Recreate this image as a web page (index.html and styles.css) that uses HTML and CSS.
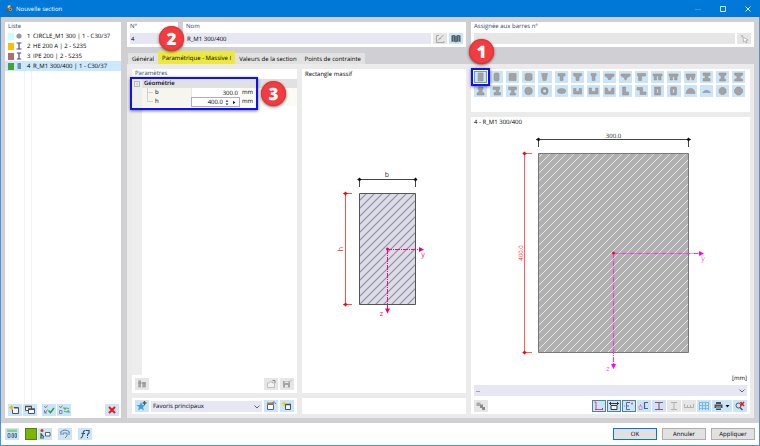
FILE: index.html
```html
<!DOCTYPE html>
<html lang="fr">
<head>
<meta charset="utf-8">
<meta name="viewport" content="width=device-width, initial-scale=1">
<title>Nouvelle section</title>
<link rel="stylesheet" href="styles.css">
</head>
<body>
<div class="window">
  <header class="titlebar">
    <svg class="app-icon" viewBox="0 0 10 10"><path d="M1 6L4 1 9 3 8 7 5 9 2 9Z" fill="#5b5a55"/><path d="M3 2L6 1 6 3 3 5Z" fill="#d9d2b8"/><circle cx="6" cy="6" r="2" fill="#a8925c"/><circle cx="6" cy="6" r=".8" fill="#333"/></svg>
    <h1>Nouvelle section</h1>
    <div class="win-buttons">
      <button aria-label="Réduire" disabled><svg viewBox="0 0 8 8"><path d="M1 4.500H7" stroke="#3a94df"/></svg></button>
      <button aria-label="Agrandir"><svg viewBox="0 0 8 8"><path d="M1.500 1.500H6.500V6.500H1.500Z" stroke="#cfe6fa" fill="none"/></svg></button>
      <button aria-label="Fermer"><svg viewBox="0 0 8 8"><path d="M1.500 1.500L6.500 6.500M6.500 1.500L1.500 6.500" stroke="#e6f2fc"/></svg></button>
    </div>
  </header>

  <main class="work">
    <aside class="list-panel panel">
      <h2 class="caption">Liste</h2>
      <ul class="sections">
        <li><button class="section-row"><span class="swatch cyan"></span><svg viewBox="0 0 8 8"><circle cx="4" cy="4" r="2.600" fill="#999"/></svg><span class="num">1</span><span>CIRCLE_M1 300 | 1 - C30/37</span></button></li>
        <li><button class="section-row"><span class="swatch amber"></span><svg viewBox="0 0 8 8"><path d="M1.500 1H6.500M4 1V7M1.500 7H6.500" stroke="#4b4b8c" stroke-width="1.200"/></svg><span class="num">2</span><span>HE 200 A | 2 - S235</span></button></li>
        <li><button class="section-row"><span class="swatch rose"></span><svg viewBox="0 0 8 8"><path d="M1.800 1H6.200M4 1V7M1.800 7H6.200" stroke="#4b4b8c" stroke-width="1.200"/></svg><span class="num">3</span><span>IPE 200 | 2 - S235</span></button></li>
        <li><button class="section-row selected"><span class="swatch green"></span><svg viewBox="0 0 8 8"><path d="M2.500 1H6V7H2.500Z" fill="#6a93ad"/></svg><span class="num">4</span><span>R_M1 300/400 | 1 - C30/37</span></button></li>
      </ul>
      <div class="list-lines"></div>
      <div class="toolbar">
        <button class="tool" aria-label="Nouvelle"><svg viewBox="0 0 14 12"><path d="M4.500 5.500V9.500H10.500V3.500H6" fill="#f6f8fa" stroke="#47525c"/><path d="M6 4H10" stroke="#47525c"/><path d="M1 3.500H6M3.500 1V6M2 2L5 5M5 2L2 5" stroke="#d8bd00" stroke-width=".7"/></svg></button>
        <button class="tool" aria-label="Copier"><svg viewBox="0 0 14 12"><path d="M2.500 2.500H8.500V6.500H2.500Z" fill="#f6f8fa" stroke="#47525c"/><path d="M5.500 5.500H11.500V9.500H5.500Z" fill="#f6f8fa" stroke="#47525c"/><path d="M5 5H12M2 2.500H9" stroke="#47525c" stroke-width="1.500"/></svg></button>
        <button class="tool gap" aria-label="Tout sélectionner"><svg viewBox="0 0 14 12"><path d="M2.500 2L3.500 4 5.500 1.500M2.500 6V9H5M2.500 7L3.500 8.500 5.500 5.500" fill="none" stroke="#667887" stroke-width=".8"/><path d="M6.500 6.500L8.500 8.500 12 4" fill="none" stroke="#2f9c5b" stroke-width="1.500"/></svg></button>
        <button class="tool" aria-label="Inverser la sélection"><svg viewBox="0 0 14 12"><path d="M2.500 2L3.500 4 5.500 1.500M2.500 6.500H5V9.500H2.500Z" fill="none" stroke="#667887" stroke-width=".8"/><path d="M7 5A3 2 0 0 1 12 5M12 7A3 2 0 0 1 7 7M7 3V5H9M12 9V7H10" fill="none" stroke="#4da873"/></svg></button>
        <button class="tool push" aria-label="Supprimer"><svg viewBox="0 0 14 12"><path d="M4 3L10 9M10 3L4 9" stroke="#f01414" stroke-width="2"/></svg></button>
      </div>
    </aside>

    <section class="editor">
      <div class="heads">
        <div class="panel head">
          <label class="caption" for="no">N°</label>
          <input id="no" class="field" value="4">
          <span class="badge badge-two">2</span>
        </div>
        <div class="panel head">
          <label class="caption" for="nom">Nom</label>
          <div class="row">
            <input id="nom" class="field" value="R_M1 300/400">
            <button class="tool off" aria-label="Modifier le nom"><svg viewBox="0 0 14 12"><path d="M6 2.500H3.500V9.500H11V8M5 7.500L10.500 2M8 5.500H6" fill="none" stroke="#a9a9a9"/></svg></button>
            <button class="tool" aria-label="Bibliothèque"><svg viewBox="0 0 14 12"><path d="M2.500 2.500Q5 1.500 7 3Q9 1.500 11.500 2.500V9Q9 8 7 9.500Q5 8 2.500 9Z" fill="#4b5f6c"/><path d="M7 3V9M4.500 3V8M9.500 3V8" stroke="#8fa9ba" stroke-width=".6"/></svg></button>
          </div>
        </div>
        <div class="panel head">
          <label class="caption" for="barres">Assignée aux barres n°</label>
          <div class="row">
            <input id="barres" class="field off" disabled>
            <button class="tool off" aria-label="Sélectionner les barres"><svg viewBox="0 0 14 12"><path d="M6 4L6.500 9 8 8 9 10 10 9.500 9 7.500 11 7Z" fill="#fff" stroke="#a8a8a8" stroke-width=".8"/><path d="M4 2L6 4M6 2L4 4" stroke="#b5b5b5" stroke-width=".8"/></svg></button>
          </div>
        </div>
      </div>

      <nav class="tabs">
        <button>Général</button>
        <button class="active">Paramétrique - Massive I</button>
        <button>Valeurs de la section</button>
        <button>Points de contrainte</button>
      </nav>

      <div class="pane">
        <div class="column">
          <div class="panel params">
            <h2 class="caption">Paramètres</h2>
            <div class="props">
              <div class="prop group"><span class="gutter"><svg viewBox="0 0 6 6"><path d="M.5.5H5.500V5.500H.5ZM2 3H4" fill="none" stroke="#999" stroke-width=".7"/></svg></span><span class="group-name">Géométrie</span></div>
              <div class="prop"><span class="gutter"></span><label for="pb"><svg viewBox="0 0 8 9"><path d="M2.500 0V9M2.500 4.500H8" stroke="#c9c9c4" stroke-width=".8"/></svg>b</label><span class="value"><input id="pb" value="300.0"></span><span class="unit">mm</span></div>
              <div class="prop"><span class="gutter"></span><label for="ph"><svg viewBox="0 0 8 9"><path d="M2.500 0V4.500H8" fill="none" stroke="#c9c9c4" stroke-width=".8"/></svg>h</label><span class="value editing"><input id="ph" value="400.0"><button aria-label="Incrément"><svg viewBox="0 0 4 8"><path d="M.5 3L2 1 3.500 3ZM.5 5L2 7 3.500 5Z" fill="#222"/></svg></button><button aria-label="Plus"><svg viewBox="0 0 4 8"><path d="M1 2L3.500 4 1 6Z" fill="#111"/></svg></button></span><span class="unit">mm</span></div>
              <span class="frame frame-params"></span>
              <span class="badge badge-three">3</span>
            </div>
            <div class="gutter-fill"></div>
            <div class="toolbar">
              <button class="tool off" aria-label="Info"><svg viewBox="0 0 14 12"><path d="M3 2.500H6V9.500H3ZM7 4H11V9.500H7Z" fill="#b3b3b3"/><path d="M3 5H11M5 2V9M9 4V9" stroke="#8f8f8f" stroke-width=".8"/></svg></button>
              <button class="tool off push" aria-label="Charger"><svg viewBox="0 0 14 12"><path d="M3.500 9.500V5H5.500L6 4H8.500V5H10.500V9.500Z" fill="#f4f4f4" stroke="#b5b5b5" stroke-width=".8"/><path d="M8.500 2.500H11V5" fill="none" stroke="#888"/></svg></button>
              <button class="tool off" aria-label="Enregistrer"><svg viewBox="0 0 14 12"><path d="M3 3H10V9.500H3Z" fill="#a3a3a3"/><path d="M4.500 3.500H8.500V5H4.500ZM5 7H8V9.500H5Z" fill="#e6e6e6"/><path d="M9 4L12 2" stroke="#bbb"/></svg></button>
            </div>
          </div>
          <div class="panel foot toolbar">
            <button class="tool" aria-label="Ajouter aux favoris"><svg viewBox="0 0 14 12"><path d="M6 2L7.200 5 10.500 5.200 8 7 9 10.500 6 8.500 3 10.500 4 7 1.500 5.200 4.800 5Z" fill="#3f9de0"/><path d="M9.500 1V5M7.500 3H11.500" stroke="#665f25" stroke-width="1.300"/></svg></button>
            <span class="select"><select aria-label="Favoris"><option>Favoris principaux</option></select><svg viewBox="0 0 8 6"><path d="M1.500 1.500L4 4 6.500 1.500" fill="none" stroke="#555" stroke-width=".9"/></svg></span>
            <button class="tool" aria-label="Gérer les favoris"><svg viewBox="0 0 14 12"><path d="M3.500 4.500H9.500V9.500H3.500Z" fill="#f6f8fa" stroke="#596570"/><path d="M3 3.500H8L10 2.500" fill="none" stroke="#a57b50" stroke-width="2"/><path d="M10 1.500L12 4" stroke="#6d86b5"/></svg></button>
            <button class="tool" aria-label="Nouveau favori"><svg viewBox="0 0 14 12"><path d="M5.500 4.500H10.500V9.500H5.500Z" fill="#f6f8fa" stroke="#47525c"/><path d="M5 4.500H11" stroke="#47525c" stroke-width="1.500"/><path d="M4 1L5 3 6.500 3.500 5 4.500 4 6.500 3 4.500 1.500 3.500 3 3Z" fill="#ead500"/></svg></button>
          </div>
        </div>

        <div class="column">
          <div class="panel sketch">
            <h2 class="plain">Rectangle massif</h2>
            <svg class="drawing" viewBox="302 79 164 314" role="img" aria-label="Schéma b × h">
              <defs><pattern id="hatchA" width="8" height="8" patternUnits="userSpaceOnUse"><path d="M-1 9L9 -1M-1 1L1 -1M7 9L9 7" stroke="#8f8f98" stroke-width="1.200"/></pattern></defs>
              <path d="M359.500 193.500H415.500V304.500H359.500Z" fill="#dcdce8"/>
              <path d="M359.500 193.500H415.500V304.500H359.500Z" fill="url(#hatchA)" stroke="#555"/>
              <path d="M357.500 179.500H417M359.500 179.500V187M415.500 179.500V187" stroke="#444"/>
              <path d="M357.500 179.500L359.500 177.500 361.500 179.500 359.500 181.500ZM413.500 179.500L415.500 177.500 417.500 179.500 415.500 181.500Z" fill="#111"/>
              <path d="M345.500 193.500V304.500M343 193.500H352M343 304.500H352" stroke="#ff5050"/>
              <path d="M343.500 193.500L345.500 191.500 347.500 193.500 345.500 195.500ZM343.500 304.500L345.500 302.500 347.500 304.500 345.500 306.500Z" fill="#f00"/>
              <path d="M387 249.500H419M387.500 249V309" fill="none" stroke="#e6108a" stroke-dasharray="5 1 1 1"/>
              <path d="M419 247L424 249.500 419 252ZM385 308.500L387.500 313.500 390 308.500Z" fill="#e6007e"/><circle cx="387.500" cy="249" r="1.500" fill="#e6007e"/>
              <text class="axis" x="387" y="177" fill="#333">b</text>
              <text class="axis" x="423" y="257" fill="#e6007e">y</text>
              <text class="axis" x="381.500" y="316" fill="#e6007e">z</text>
              <text class="axis" transform="translate(343 249) rotate(-90)" fill="#f22">h</text>
            </svg>
          </div>
          <div class="panel foot"></div>
        </div>

        <div class="column">
          <div class="panel shapes">
            <button aria-label="Rectangle" class="current"><svg viewBox="0 0 13 12"><path d="M4 2H9V10H4Z"/></svg></button>
            <button aria-label="Rectangle arrondi"><svg viewBox="0 0 13 12"><path d="M5 2H8L9 3V9L8 10H5L4 9V3Z"/></svg></button>
            <button aria-label="Carré"><svg viewBox="0 0 13 12"><path d="M3 2.500H10V9.500H3Z"/></svg></button>
            <button aria-label="Carré arrondi"><svg viewBox="0 0 13 12"><path d="M4 2.500H9L10 3.500V8.500L9 9.500H4L3 8.500V3.500Z"/></svg></button>
            <button aria-label="Trapèze"><svg viewBox="0 0 13 12"><path d="M3.500 2.500H9.500L8 9.500H5Z"/></svg></button>
            <button aria-label="Section T"><svg viewBox="0 0 13 12"><path d="M3 2.500H10V5H8V9.500H5V5H3Z"/></svg></button>
            <button aria-label="Section T à goussets"><svg viewBox="0 0 13 12"><path d="M2.500 2.500H10.500V4.500L8 6V9.500H5V6L2.500 4.500Z"/></svg></button>
            <button aria-label="Section T étroite"><svg viewBox="0 0 13 12"><path d="M4 2.500H9V4.500L8 5.500V9.500H5V5.500L4 4.500Z"/></svg></button>
            <button aria-label="Section T évasée"><svg viewBox="0 0 13 12"><path d="M2 3H11V5L8 7V8.500H5V7L2 5Z"/></svg></button>
            <button aria-label="Section T conique"><svg viewBox="0 0 13 12"><path d="M2 3H11V5L8 6.500L7 9H6L5 6.500L2 5Z"/></svg></button>
            <button aria-label="Demi T"><svg viewBox="0 0 13 12"><path d="M2.500 2.500H10.500V5H6.500V9.500H3.500V5H2.500Z"/></svg></button>
            <button aria-label="Double T"><svg viewBox="0 0 13 12"><path d="M2 3H11V5H10V9H7.500V5H5.500V9H3V5H2Z"/></svg></button>
            <button aria-label="Double T à goussets"><svg viewBox="0 0 13 12"><path d="M2 3H11V5L10 5.500V9H7.500V5.500H5.500V9H3V5.500L2 5Z"/></svg></button>
            <button aria-label="Double T conique"><svg viewBox="0 0 13 12"><path d="M2 3H11V5L9.500 9H8L7 5.500H6L5 9H3.500L2 5Z"/></svg></button>
            <button aria-label="Section I"><svg viewBox="0 0 13 12"><path d="M3 2H10V4.500H8V7.500H10V10H3V7.500H5V4.500H3Z"/></svg></button>
            <button aria-label="Section I à goussets"><svg viewBox="0 0 13 12"><path d="M3 2H10V4L8 5V7.500L9.500 8.500V10H3.500V8.500L5 7.500V5L3 4Z"/></svg></button>
            <button aria-label="Section I large"><svg viewBox="0 0 13 12"><path d="M2.500 2H10.500V4L8 5.500V7L10.500 8.500V10H2.500V8.500L5 7V5.500L2.500 4Z"/></svg></button>
            <button aria-label="Rail"><svg viewBox="0 0 13 12"><path d="M4 2H9V4L8 5.500V7L10 8V10H3V8L5 7V5.500L4 4Z"/></svg></button>
            <button aria-label="I décalé"><svg viewBox="0 0 13 12"><path d="M3 2H9.500V4.500H8.500V7.500H10.500V10H4V7.500H6V4.500H3Z"/></svg></button>
            <button aria-label="I asymétrique"><svg viewBox="0 0 13 12"><path d="M2.500 2H10.500V4.500L8 5V7.500L9.500 8.500V10H4V8.500L5.500 7.500V5L2.500 4.500Z"/></svg></button>
            <button aria-label="Cercle"><svg viewBox="0 0 13 12"><circle cx="6.500" cy="6" r="3.800"/></svg></button>
            <button aria-label="Anneau"><svg viewBox="0 0 13 12"><circle cx="6.500" cy="6" r="2.700" class="ring"/></svg></button>
            <button aria-label="Ellipse"><svg viewBox="0 0 13 12"><ellipse cx="6.500" cy="6" rx="4.200" ry="2.500"/></svg></button>
            <button aria-label="Section U"><svg viewBox="0 0 13 12"><path d="M2.500 3.500H5V6.500H8V3.500H10.500V9H2.500Z"/></svg></button>
            <button aria-label="U à goussets"><svg viewBox="0 0 13 12"><path d="M2 3H4.500V5.500L5.500 6.500H7.500L8.500 5.500V3H11V9H2Z"/></svg></button>
            <button aria-label="U conique"><svg viewBox="0 0 13 12"><path d="M2 3H4L5.500 6.500H7.500L9 3H11V9H2Z"/></svg></button>
            <button aria-label="Section L"><svg viewBox="0 0 13 12"><path d="M3.500 2H6.500V7H9.500V10H3.500Z"/></svg></button>
            <button aria-label="Section Z"><svg viewBox="0 0 13 12"><path d="M2 2.500H7.500V7H11V9.500H5V5H2Z"/></svg></button>
            <button aria-label="Caisson"><svg viewBox="0 0 13 12"><path fill-rule="evenodd" d="M3.500 2H9.500V10H3.500ZM5.500 4V8H7.500V4Z"/></svg></button>
            <button aria-label="Caisson arrondi"><svg viewBox="0 0 13 12"><path fill-rule="evenodd" d="M4 2H9L9.500 3V9L9 10H4L3.500 9V3ZM5.500 4V8H7.500V4Z"/></svg></button>
            <button aria-label="Demi-cercle"><svg viewBox="0 0 13 12"><path d="M2 8.500Q2.500 3.500 6.500 3.500T11 8.500Z"/></svg></button>
            <button aria-label="Segment"><svg viewBox="0 0 13 12"><path d="M2.500 7.500Q6.500 3 10.500 7.500Z"/></svg></button>
            <button aria-label="Octogone"><svg viewBox="0 0 13 12"><path d="M5 2.500H8L10 4.500V7.500L8 9.500H5L3 7.500V4.500Z"/></svg></button>
            <button aria-label="Polygone"><svg viewBox="0 0 13 12"><path d="M5 2H8L10.500 4.500V7.500L8 10H5L2.500 7.500V4.500Z"/></svg></button>
            <span class="frame frame-shape"></span>
            <span class="badge badge-one">1</span>
          </div>

          <div class="panel preview">
            <h2 class="plain">4 - R_M1 300/400</h2>
            <svg class="drawing" viewBox="474 127 273 247" role="img" aria-label="R_M1 300/400">
              <defs><pattern id="hatchB" width="8" height="8" patternUnits="userSpaceOnUse"><path d="M-1 9L9 -1M-1 1L1 -1M7 9L9 7" stroke="#e6e6e6"/></pattern></defs>
              <path d="M538.500 153.500H688.500V352.500H538.500Z" fill="#b0b0b0"/>
              <path d="M538.500 153.500H688.500V352.500H538.500Z" fill="url(#hatchB)" stroke="#777"/>
              <path d="M536 139.500H691M538.500 139.500V147M688.500 139.500V147" stroke="#444"/>
              <path d="M536.500 139.500L538.500 137.500 540.500 139.500 538.500 141.500ZM686.500 139.500L688.500 137.500 690.500 139.500 688.500 141.500Z" fill="#111"/>
              <path d="M524.500 153V353M522.500 153.500H532M522.500 352.500H532" stroke="#ff6060"/>
              <path d="M522.500 153.500L524.500 151.500 526.500 153.500 524.500 155.500ZM522.500 352.500L524.500 350.500 526.500 352.500 524.500 354.500Z" fill="#f00"/>
              <path d="M613.500 253.500H700M613.500 253V365" fill="none" stroke="#f03cf0" stroke-width="1.200" stroke-dasharray="5 1 1 1"/>
              <path d="M699 251L704 253.500 699 256ZM611 364L613.500 369 616 364Z" fill="#f0f"/><circle cx="613.500" cy="253" r="1.500" fill="#f01020"/>
              <text x="613.500" y="138" fill="#222">300.0</text>
              <text class="axis" x="703" y="261" fill="#f4f">y</text>
              <text class="axis" x="608" y="371" fill="#f4f">z</text>
              <text transform="translate(523 253) rotate(-90)" fill="#f22">400.0</text>
            </svg>
            <p class="units">[mm]</p>
            <span class="select"><select aria-label="Affichage"><option>--</option></select><svg viewBox="0 0 8 6"><path d="M1.500 1.500L4 4 6.500 1.500" fill="none" stroke="#555" stroke-width=".9"/></svg></span>
            <div class="toolbar">
              <button class="tool off" aria-label="Matériau"><svg viewBox="0 0 14 12"><path d="M2.500 2.500H6.500V6H2.500Z" fill="#aaa"/><path d="M6 4.500H9V7H11V10H8V8H6Z" fill="#8c8c8c"/></svg></button>
              <button class="tool on push" aria-label="Axes"><svg viewBox="0 0 14 12"><path d="M4 2V9.500H11" fill="none" stroke="#d84d6c"/><path d="M2.500 2H4M3 9.500H5M10.500 8V10" stroke="#e33"/></svg></button>
              <button class="tool on" aria-label="Cotes"><svg viewBox="0 0 14 12"><path d="M4 5.500H10V9.500H4Z" fill="#eef6fc" stroke="#333"/><path d="M2 3.500H12M3.500 2V5M10.500 2V5" stroke="#333"/></svg></button>
              <button class="tool on" aria-label="Points de contrainte"><svg viewBox="0 0 14 12"><path d="M8 2.500H4.500V9.500H8M4.500 6H7" fill="none" stroke="#5c6b90"/><path d="M9 3.500H11M10 2V5M2 6H3" stroke="#cf5a9b" stroke-width=".8"/></svg></button>
              <button class="tool" aria-label="Éléments"><svg viewBox="0 0 14 12"><path d="M11 2.500H7.500V8.500H11" fill="none" stroke="#46658b" stroke-width="1.200"/><path d="M2 6H5V9.500H2ZM3.500 4V6" fill="none" stroke="#c27cb6" stroke-width=".8"/></svg></button>
              <button class="tool" aria-label="Profil"><svg viewBox="0 0 14 12"><path d="M3 2.500H11M3 9.500H11" stroke="#cf3a50"/><path d="M7 3V9" stroke="#3c5f85"/></svg></button>
              <button class="tool off" aria-label="Âme"><svg viewBox="0 0 14 12"><path d="M4 2.500H10M7 2.500V9.500M4 9.500H10" stroke="#b0b0b0"/></svg></button>
              <button class="tool off" aria-label="Valeurs"><svg viewBox="0 0 14 12"><path d="M2.500 4V7.500H11.500V4M5.500 5V7M8.500 5V7" fill="none" stroke="#aaa" stroke-width=".9"/></svg></button>
              <button class="tool" aria-label="Grille"><svg viewBox="0 0 14 12"><path d="M2.500 2V10M5.500 2V10M8.500 2V10M11.500 2V10M2 2.500H12M2 5.500H12M2 8.500H12" stroke="#6bb8ee" stroke-width=".9"/></svg></button>
              <button class="tool wide" aria-label="Imprimer"><svg viewBox="0 0 20 12"><path d="M4 2H9V4H4ZM2.500 4.500H10.500V8H2.500ZM4 8.500H9V10H4Z" fill="#47515a"/><path d="M4 7H9" stroke="#dfe9f0" stroke-width=".8"/><path d="M13.500 5H17.500L15.500 7.500Z" fill="#111"/></svg></button>
              <button class="tool" aria-label="Réinitialiser la vue"><svg viewBox="0 0 14 12"><circle cx="5.500" cy="5.500" r="2.500" fill="none" stroke="#4c5965"/><path d="M7 7.500L9.500 10" stroke="#4c5965" stroke-width="1.500"/><path d="M7.500 2L11 6M11 2L7.500 6" stroke="#f01818" stroke-width="1.500"/></svg></button>
            </div>
          </div>
        </div>
      </div>
    </section>
  </main>

  <footer class="actions">
    <button class="tool" aria-label="Unités"><svg viewBox="0 0 14 12"><path d="M2 1.500H12V4H2Z" fill="#8dcf7c"/><path d="M3 5.500H5V9.500H3ZM7 5.500H8.500V9.500H7ZM10 5.500H11.500V9.500H10Z" fill="none" stroke="#54718b" stroke-width=".9"/></svg></button>
    <button class="tool color gap" aria-label="Couleur"></button>
    <button class="tool" aria-label="Affichage"><svg viewBox="0 0 14 12"><circle cx="4" cy="2.500" r="1.500" fill="#e32828"/><path d="M3 5V10M3 6L6 9M2 10H6" stroke="#386a48" stroke-width="1.200"/><path d="M7.500 4.500H12V8H7.500Z" fill="#fff" stroke="#47525c" stroke-width=".9"/></svg></button>
    <button class="tool gap" aria-label="Rendu"><svg viewBox="0 0 14 12"><path d="M2 4.500Q7 -.5 12 4.500M5 7V5H9V8L7 10M3 4V7M11 4V7" fill="none" stroke="#6c8598"/></svg></button>
    <button class="tool gap" aria-label="Formule"><svg viewBox="0 0 14 12"><path d="M2.500 10Q4.500 10 5 6T7.500 2.500M3.500 5.500H7M8 2.500H11V5L9.500 6.500V8M9 9.500H10" fill="none" stroke="#37506b" stroke-width="1.100"/></svg></button>
    <div class="dialog-buttons">
      <button class="primary">OK</button>
      <button>Annuler</button>
      <button>Appliquer</button>
    </div>
  </footer>
</div>
</body>
</html>
```
FILE: styles.css
```css
* { box-sizing: border-box; }

body {
  margin: 0;
  font: 6px/8px "Open Sans", "Noto Sans", sans-serif;
  text-rendering: geometricPrecision;
  color: #000;
}

button, input, select { font: inherit; color: inherit; text-rendering: inherit; margin: 0; padding: 0; border: 0; border-radius: 0; background: none; }
h1, h2, p, ul { margin: 0; padding: 0; font: inherit; list-style: none; }
svg { display: block; }

.window {
  display: flex;
  flex-direction: column;
  min-height: 100vh;
  border: 1px solid #4a94d8;
  border-top: 0;
  background: #fff;
}

.titlebar {
  display: flex;
  align-items: center;
  height: 17px;
  margin: 0 -1px;
  padding: 0 8px 0 5px;
  background: #0078d7;
  color: #fff;
}
.app-icon { width: 9px; height: 9px; margin-right: 2px; }
.win-buttons { display: flex; gap: 17px; margin-left: auto; }
.win-buttons svg { width: 8px; height: 8px; }

.work {
  display: flex;
  flex: 1;
  gap: 6px;
  padding: 5px 5px 5px 4px;
  background: #d0d0d4;
}

.panel { background: #fff; }
.caption { display: block; color: #2c3f70; }

.tool { flex: none; width: 14px; height: 12px; background: #cce4f7; }
.tool svg { width: 14px; height: 12px; }
.tool.off { background: #e6e6e6; }
.tool.on { border: 1px solid #4d81a8; }
.tool.on svg { margin: -1px; }
.tool.wide, .tool.wide svg { width: 20px; }
.tool.push { margin-left: auto; }
.toolbar { display: flex; align-items: center; gap: 1px; }

/* section list */
.list-panel { display: flex; flex: none; flex-direction: column; width: 116px; }
.list-panel .caption { padding: 0 3px 1px; }
.list-panel .toolbar { padding: 0 2px 2px 3px; }
.list-panel .gap { margin-left: 4px; }
.section-row { display: flex; align-items: center; width: 100%; height: 10px; padding-left: 3px; text-align: left; white-space: nowrap; }
.section-row svg { flex: none; width: 8px; height: 8px; margin: 0 4px 0 1px; }
.section-row .num { width: 6px; }
.section-row.selected { background: #cce8ff; }
.swatch { flex: none; width: 6px; height: 7px; }
.cyan { background: #c8ffff; }
.amber { background: #f8c000; }
.rose { background: #b86a6c; }
.green { background: #46a436; }
.list-lines { flex: 1; width: 8px; margin-left: 19px; border: solid #f3f3f3; border-width: 0 1px; }

/* editor */
.editor { display: flex; flex: 1; flex-direction: column; min-width: 0; }
.heads { display: grid; grid-template-columns: 51fr 283fr 283fr; gap: 5px; }
.head { position: relative; min-width: 0; height: 25px; padding: 0 3px; }
.head .caption { margin-bottom: 3px; }
.row { display: flex; gap: 2px; }
.field { flex: 1; width: 100%; min-width: 0; height: 11px; padding: 0 1px; background: #e7e7f4; }
.field.off { background: #e6e6e6; }
.head .tool { height: 11px; }

.tabs { display: flex; align-items: flex-end; height: 17px; padding-left: 1px; }
.tabs button { height: 11px; padding: 0 4px; background: #e2e2e2; white-space: nowrap; }
.tabs .active { height: 13px; background: #ece83f; }

.pane {
  display: grid;
  flex: 1;
  grid-template-columns: 165fr 164fr 279fr;
  gap: 5px;
  padding: 5px 4px 4px 5px;
  background: #ebebeb;
}
.column { display: flex; flex-direction: column; gap: 5px; min-width: 0; }
.foot { height: 16px; }
.foot.toolbar { gap: 2px; padding: 0 3px; }

/* parameter grid */
.params { display: flex; flex: 1; flex-direction: column; }
.params > .caption { padding: 0 3px; margin-bottom: 2px; }
.params > .toolbar { gap: 2px; padding: 3px; }
.props { position: relative; }
.prop { display: grid; grid-template-columns: 10px 49px 49px 1fr; height: 9px; background: #fbfbf5; }
.prop.group { grid-template-columns: 10px 1fr; background: #e1e1e1; }
.gutter { display: grid; place-items: center; background: #ededed; }
.gutter svg { width: 6px; height: 6px; }
.group-name { padding-left: 2px; font-weight: 600; }
.prop label { display: flex; gap: 2px; padding-left: 3px; background: #f6f6ef; }
.prop label svg { width: 8px; height: 9px; }
.value { display: flex; min-width: 0; padding-right: 2px; background: #fff; border-left: 1px solid #e8e8e8; }
.value.editing { border: 1px solid #a9a9e8; }
.value input { flex: 1; width: 100%; min-width: 0; text-align: right; }
.value button { width: 5px; margin-left: 2px; }
.value svg { width: 4px; height: 7px; }
.unit { padding-left: 2px; }
.gutter-fill { flex: 1; width: 10px; background: #ededed; }

.select { position: relative; display: flex; flex: 1; height: 11px; background: #e7e7f4; }
.select select { flex: 1; width: 100%; padding: 0 2px; appearance: none; }
.select svg { position: absolute; top: 3px; right: 1px; width: 8px; height: 6px; pointer-events: none; }

/* drawings */
.plain { padding: 1px 3px; }
.sketch { display: flex; flex: 1; flex-direction: column; }
.drawing { display: block; flex: 1 1 0; width: 100%; height: 0; min-height: 200px; }
.drawing text { text-anchor: middle; }
.drawing .axis { font-size: 7px; }

.shapes {
  position: relative;
  display: grid;
  grid-template-columns: repeat(17, 1fr);
  grid-auto-rows: 12px;
  align-content: start;
  gap: 2px 3px;
  height: 43px;
  padding: 2px 5px 2px 3px;
}
.shapes button { background: #cce4f7; }
.shapes .current { outline: 1px solid #6f9cb8; outline-offset: -1px; }
.shapes svg { width: 100%; height: 12px; fill: #a3a3a3; stroke: #8f8f8f; stroke-width: .5; }
.shapes .ring { fill: none; stroke: #9a9a9a; stroke-width: 2.4; }

.preview { display: flex; flex: 1; flex-direction: column; padding: 0 3px 2px; }
.preview .plain { padding: 1px 0; }
.units { margin-bottom: 3px; text-align: right; }
.preview .select { flex: none; margin-bottom: 4px; }

/* callouts */
.badge {
  position: absolute;
  z-index: 2;
  width: 25px;
  height: 25px;
  border-radius: 50%;
  background: #f43c40;
  box-shadow: 0 1px 3px #0009, inset 0 0 2px #b02020;
  color: #fff;
  font: 800 17px/25px "Open Sans", sans-serif;
  text-align: center;
}
.badge-one { top: -30px; left: -2px; }
.badge-two { top: 4px; left: 32px; }
.badge-three { top: 2px; left: 129px; }
.frame { position: absolute; border: 2px solid #1010f0; box-shadow: 0 1px 3px #0008; pointer-events: none; }
.frame-shape { top: -1px; left: 0; width: 19px; height: 18px; }
.frame-params { top: -2px; left: -2px; width: 128px; height: 33px; }

/* footer */
.actions { display: flex; align-items: center; gap: 1px; height: 22px; padding: 0 4px; }
.actions .gap { margin-left: 5px; }
.actions .color { width: 12px; border: 1px solid #5a7a20; background: #7ab800; }
.dialog-buttons { display: flex; gap: 5px; margin-left: auto; }
.dialog-buttons button { width: 44px; height: 12px; border: 1px solid #adadad; background: #e1e1e1; line-height: 8px; }
.dialog-buttons .primary { border: 1px solid #0078d7; }
```
